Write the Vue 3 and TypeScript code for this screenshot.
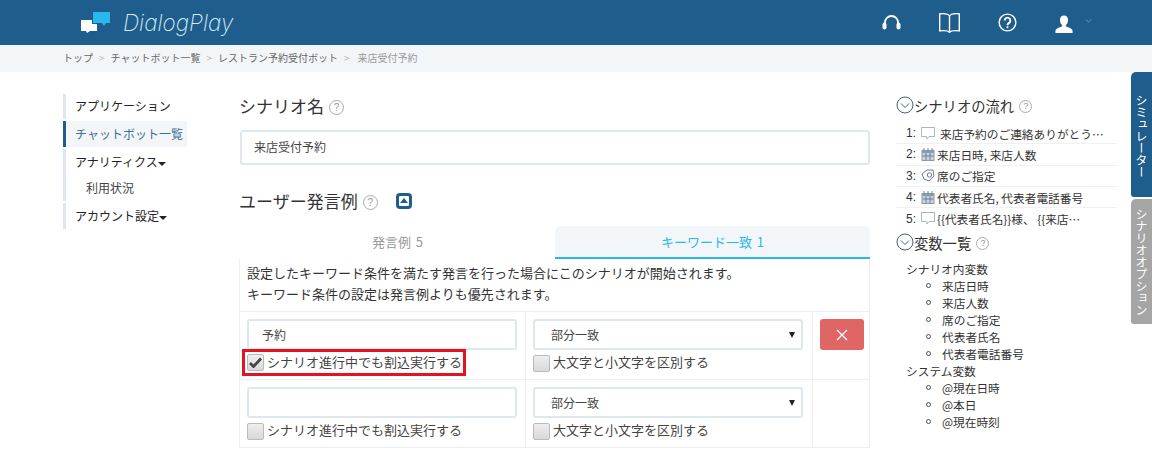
<script setup lang="ts">
const crumbs = ['チャットボット一覧', 'レストラン予約受付ボット']
const flow = [
  { n: '1:', icon: 'chat', text: '来店予約のご連絡ありがとう…' },
  { n: '2:', icon: 'cal', text: '来店日時, 来店人数' },
  { n: '3:', icon: 'tag', text: '席のご指定' },
  { n: '4:', icon: 'cal', text: '代表者氏名, 代表者電話番号' },
  { n: '5:', icon: 'chat', text: '{{代表者氏名}}様、 {{来店…' },
]
const scenarioVars = ['来店日時', '来店人数', '席のご指定', '代表者氏名', '代表者電話番号']
const systemVars = ['@現在日時', '@本日', '@現在時刻']
const rows = [
  { value: '予約', checked: true, removable: true },
  { value: '', checked: false, removable: false },
]
</script>

<template>
  <div class="page">
    <header class="topbar">
      <div class="brand">
        <svg class="logo" width="29" height="21" viewBox="0 0 29 21">
          <path d="M12 0h17v11h-4l-2 3-2-3H12z" fill="#2bb7ea" />
          <path d="M0 8h11v4h5v7H9l-3 2-1-2H0z" fill="#fff" />
        </svg>
        <span class="brand-name">DialogPlay</span>
      </div>
      <nav class="topnav">
        <svg width="19" height="15" viewBox="0 0 19 15" fill="none">
          <path d="M3 10V7.500a6.500 6.500 0 0 1 13 0V10" stroke="#fff" stroke-width="1.800" />
          <rect x="0.500" y="7.500" width="4" height="7" rx="2" fill="#fff" />
          <rect x="14.500" y="7.500" width="4" height="7" rx="2" fill="#fff" />
        </svg>
        <svg width="21" height="20" viewBox="0 0 21 20" fill="none" stroke="#fff" stroke-width="1.400">
          <path d="M.7.900c4-.5 8-.5 9.800 2 1.800-2.500 5.800-2.500 9.800-2v17c-4-.5-8-.5-9.800 1.400-1.800-1.900-5.800-1.900-9.800-1.400z" />
          <path d="M10.500 3v16" />
        </svg>
        <svg width="19" height="19" viewBox="0 0 20 20" fill="none" stroke="#fff">
          <circle cx="10" cy="10" r="8.800" stroke-width="1.500" />
          <path d="M7 7.800a3 3 0 1 1 4.600 2.600c-1 .7-1.600 1.200-1.600 2.400" stroke-width="2" />
          <circle cx="10" cy="15" r="1.100" fill="#fff" stroke="none" />
        </svg>
        <span class="user">
          <svg width="18" height="19" viewBox="0 0 20 20">
            <path d="M10 0c3 0 4.500 2.200 4.500 5 0 2.500-1 4.500-2.300 5.600v1.700c2.500 1 6.800 1.900 7.300 4.700v2.500H.5V17c.5-2.800 4.800-3.700 7.300-4.700v-1.700C6.500 9.500 5.500 7.500 5.500 5 5.500 2.200 7 0 10 0z" fill="#fff" />
          </svg>
          <svg class="user-caret" width="7" height="4" viewBox="0 0 8 5" fill="none">
            <path d="M.5.500 4 4 7.500.500" stroke="#7fa3bf" />
          </svg>
        </span>
      </nav>
    </header>

    <div class="crumbs">
      <span>トップ</span>
      <i>&gt;</i>
      <template v-for="c in crumbs" :key="c">
        <span>{{ c }}</span>
        <i>&gt;</i>
      </template>
      <span class="current">来店受付予約</span>
    </div>

    <div class="content">
      <aside class="side">
        <ul class="side-list">
          <li class="first">アプリケーション</li>
          <li class="active">チャットボット一覧</li>
          <li class="group">
            アナリティクス<b class="caret"></b>
            <div class="sub">利用状況</div>
          </li>
          <li class="last">アカウント設定<b class="caret"></b></li>
        </ul>
      </aside>

      <main class="main">
        <h2 class="heading">シナリオ名 <span class="help">?</span></h2>
        <div class="field name-field">来店受付予約</div>

        <h2 class="heading second">
          ユーザー発言例 <span class="help">?</span>
          <span class="collapse"><b></b></span>
        </h2>

        <div class="tabs">
          <div class="tab">発言例 5</div>
          <div class="tab on">キーワード一致 1</div>
        </div>

        <div class="table">
          <p class="intro">
            設定したキーワード条件を満たす発言を行った場合にこのシナリオが開始されます。<br />
            キーワード条件の設定は発言例よりも優先されます。
          </p>
          <div v-for="(r, i) in rows" :key="i" class="row">
            <div class="cell">
              <div class="field small">{{ r.value }}</div>
              <label class="check" :class="{ marked: r.checked }">
                <span class="box">
                  <svg v-if="r.checked" width="13" height="11" viewBox="0 0 13 11">
                    <path d="M1 6l3.500 3.500L12 1.500" fill="none" stroke="#444" stroke-width="2.800" />
                  </svg>
                </span>
                <span class="check-text">シナリオ進行中でも割込実行する</span>
              </label>
            </div>
            <div class="cell">
              <div class="field small select">部分一致<b></b></div>
              <label class="check">
                <span class="box"></span>
                <span class="check-text">大文字と小文字を区別する</span>
              </label>
            </div>
            <div class="cell action">
              <button v-if="r.removable" class="remove" type="button">
                <svg width="12" height="12" viewBox="0 0 12 12">
                  <path d="M1 1l10 10M11 1 1 11" stroke="#fff" stroke-width="1.300" />
                </svg>
              </button>
            </div>
          </div>
        </div>
      </main>

      <aside class="right">
        <h3 class="r-head">
          <svg class="chev" width="18" height="18" viewBox="0 0 18 18" fill="none">
            <circle cx="9" cy="9" r="8" stroke="#46607a" />
            <path d="M5 7.500 9 11.500 13 7.500" stroke="#46607a" />
          </svg>シナリオの流れ <span class="help">?</span>
        </h3>
        <ol class="flow">
          <li v-for="f in flow" :key="f.n">
            <span class="num">{{ f.n }}</span>
            <svg v-if="f.icon === 'chat'" class="ficon" width="14" height="13" viewBox="0 0 14 13" fill="none">
              <path d="M.5.500h13v9H8l-2 2.500-.5-2.500h-5z" stroke="#a9b5c0" />
            </svg>
            <svg v-else-if="f.icon === 'cal'" class="ficon" width="14" height="13" viewBox="0 0 14 13">
              <rect x=".5" y="2" width="13" height="11" fill="#8a9cb0" />
              <rect x="1.500" y="5" width="11" height="7" fill="#c8d2dc" />
              <path d="M3 0v3M7 0v3M11 0v3M1.500 8h11M5 5v7M9 5v7" stroke="#6f8297" />
            </svg>
            <svg v-else class="ficon" width="14" height="13" viewBox="0 0 14 13" fill="none" stroke="#6f7b86">
              <path d="M1 5 6 1h6l1 6-5 5-5-2z" />
              <circle cx="8.500" cy="6" r="2.200" />
            </svg>
            <span :class="{ gap: f.n === '1:' }">{{ f.text }}</span>
          </li>
        </ol>
        <h3 class="r-head">
          <svg class="chev" width="18" height="18" viewBox="0 0 18 18" fill="none">
            <circle cx="9" cy="9" r="8" stroke="#46607a" />
            <path d="M5 7.500 9 11.500 13 7.500" stroke="#46607a" />
          </svg>変数一覧 <span class="help">?</span>
        </h3>
        <div class="vars">
          <div>シナリオ内変数</div>
          <ul>
            <li v-for="v in scenarioVars" :key="v">{{ v }}</li>
          </ul>
          <div>システム変数</div>
          <ul>
            <li v-for="v in systemVars" :key="v">{{ v }}</li>
          </ul>
        </div>
      </aside>
    </div>

    <div class="rail">
      <div class="rail-tab sim">シミュレーター</div>
      <div class="rail-tab opt">シナリオオプション</div>
    </div>
  </div>
</template>

<style>
html, body { margin: 0; background: #fff; overflow: hidden; }
</style>

<style scoped>
.page {
  position: relative;
  width: 1152px;
  height: 465px;
  overflow: hidden;
  font-family: "Noto Sans CJK JP", "Noto Sans", sans-serif;
  font-size: 12px;
  color: #333;
}
.topbar {
  height: 45px;
  background: #1f5d8c;
  display: flex;
  align-items: center;
  justify-content: space-between;
  padding: 0 60px 0 81px;
  box-sizing: border-box;
}
.brand { display: flex; align-items: center; gap: 13px; }
.logo { display: block; }
.brand-name {
  font-family: Inter, "Open Sans", sans-serif;
  font-style: italic;
  font-weight: 200;
  font-size: 22.500px;
  color: #d5eaf8;
}
.topnav { display: flex; align-items: center; gap: 38px; }
.topnav svg { display: block; }
.user { display: flex; align-items: center; gap: 12px; margin-top: 4px; }
.user-caret { margin-bottom: 8px; }
.crumbs {
  height: 27px;
  background: #f3f6f9;
  display: flex;
  align-items: center;
  padding: 0 0 2px 63px;
  box-sizing: border-box;
  font-size: 10px;
  color: #666;
}
.crumbs i { font-style: normal; color: #b5b5b5; margin: 0 6px; }
.crumbs .current { color: #999; margin-left: 2px; }

.content {
  display: grid;
  grid-template-columns: 124px 630px 221px;
  padding: 22px 0 0 63px;
}
.side { width: 124px; }
.side-list {
  list-style: none;
  margin: 0;
  padding: 0;
  display: flex;
  flex-direction: column;
  gap: 2px;
}
.side-list li {
  line-height: 24px;
  min-height: 26px;
  padding: 1px 0 0 9px;
  box-sizing: border-box;
  border-left: 3px solid #dfe7ee;
  color: #222;
}
.side-list li.first { min-height: 25px; line-height: 22px; }
.side-list li.group { height: 52px; }
.side-list li.last { line-height: 23px; }
.side-list li.active {
  border-left-color: #1f5d8c;
  background: #f3f6f9;
  color: #3f6f92;
}
.sub { padding: 2px 0 0 11px; color: #444; height: 24px; }
.caret {
  display: inline-block;
  border: 4px solid transparent;
  border-top: 4px solid #222;
  border-bottom: 0;
  vertical-align: middle;
}

.main { margin-left: 53px; width: 630px; }
.heading {
  margin: -1px 0 0 -1px;
  height: 26px;
  line-height: 26px;
  font-size: 17px;
  font-weight: 400;
  color: #333;
  display: flex;
  align-items: center;
  gap: 5px;
}
.second { margin-top: 23px; }
.help {
  display: inline-flex;
  align-items: center;
  justify-content: center;
  width: 13px;
  height: 13px;
  border: 1.500px solid #aaa;
  border-radius: 50%;
  font-size: 10px;
  line-height: 1;
  color: #999;
  margin-top: 3px;
  box-sizing: content-box;
  font-family: "Liberation Sans", sans-serif;
}
.collapse {
  width: 16px;
  height: 16px;
  box-sizing: border-box;
  border: 3px solid #1f5d8c;
  border-radius: 4px;
  margin: -1px 0 0 13px;
  display: inline-flex;
  align-items: center;
  justify-content: center;
}
.collapse b {
  border: 4px solid transparent;
  border-bottom: 5px solid #1f5d8c;
  border-top: 0;
}
.field {
  box-sizing: border-box;
  border: 2px solid #dfe7ee;
  border-radius: 3px;
  background: #fff;
  color: #444;
}
.name-field {
  margin-top: 11px;
  height: 35px;
  line-height: 29px;
  padding-left: 12px;
  width: 630px;
}
.tabs {
  display: flex;
  margin-top: 12px;
  width: 630px;
  height: 33px;
  font-size: 13px;
}
.tab {
  flex: 1;
  text-align: center;
  line-height: 31px;
  color: #999;
  box-sizing: border-box;
  word-spacing: 2px;
}
.tab.on {
  flex: 0 0 315px;
  background: #f3f6f9;
  color: #2bb7ea;
  border-bottom: 2px solid #2bb7ea;
  border-radius: 6px 6px 0 0;
}
.table {
  width: 631px;
  margin-left: -1px;
  box-sizing: border-box;
  border: 1px solid #eee;
  border-top: 0;
}
.intro {
  margin: 0;
  height: 52px;
  padding: 3px 7px 0;
  box-sizing: border-box;
  font-size: 13px;
  line-height: 21px;
  color: #333;
}
.row {
  display: grid;
  grid-template-columns: 286px 287px 1fr;
  height: 68px;
  box-sizing: border-box;
  border-top: 1px solid #eee;
}
.cell {
  padding: 7px 9px 0 7px;
  box-sizing: border-box;
  border-right: 1px solid #eee;
}
.cell:first-child { padding-right: 8px; }
.cell:last-child { border-right: 0; }
.small {
  height: 31px;
  line-height: 27px;
  padding-left: 13px;
  position: relative;
}
.select { padding-left: 16px; }
.select b {
  position: absolute;
  right: 6px;
  top: 11px;
  border: 3px solid transparent;
  border-top: 6px solid #222;
  border-bottom: 0;
}
.check {
  display: flex;
  align-items: center;
  gap: 3px;
  height: 20px;
  margin-top: 3px;
  font-size: 13px;
  color: #444;
  position: relative;
  white-space: nowrap;
}
.check-text { margin-bottom: 3px; }
.box {
  width: 17px;
  height: 17px;
  box-sizing: border-box;
  border: 1px solid #bbb;
  border-radius: 2px;
  background: linear-gradient(#eee, #d9d9d9);
  display: inline-flex;
  align-items: center;
  justify-content: center;
  flex: none;
}
.marked {
  outline: 3px solid #e2141f;
  outline-offset: -3px;
  width: 224px;
  height: 27px;
  margin: -1px 0 0 -5px;
  padding-left: 5px;
  box-sizing: border-box;
}
.action { padding: 7px 6px 0 7px; }
.remove {
  display: flex;
  align-items: center;
  justify-content: center;
  width: 44px;
  height: 31px;
  background: #e06666;
  border: 0;
  border-radius: 3px;
  padding: 0;
}

.right { margin-left: 79px; width: 221px; }
.r-head {
  margin: 0;
  height: 23px;
  font-size: 14.300px;
  font-weight: 400;
  color: #333;
  display: flex;
  align-items: center;
  white-space: pre;
}
.chev { margin-bottom: 1px; }
.r-head .help { width: 11px; height: 11px; font-size: 9px; margin-top: 2px; margin-left: 2px; }
.flow { list-style: none; margin: 6px 0 2px; padding: 0; }
.flow li {
  height: 21.300px;
  box-sizing: border-box;
  border-bottom: 1px solid #f1f1f1;
  padding-left: 10px;
  font-size: 11.700px;
  display: flex;
  align-items: center;
  white-space: nowrap;
  color: #333;
}
.flow li:last-child { border-bottom: 0; }
.num { margin-right: 5px; font-family: "Liberation Sans", sans-serif; font-size: 12px; }
.ficon { flex: none; margin-right: 2px; }
.gap { margin-left: 3px; }
.vars { margin-top: 6px; padding-left: 10px; font-size: 11.700px; line-height: 17px; color: #333; }
.vars ul { margin: 0; padding: 0 0 0 36px; list-style: none; }
.vars li { position: relative; }
.vars li::before {
  content: "";
  position: absolute;
  left: -16px;
  top: 6px;
  width: 3px;
  height: 3px;
  border: 1px solid #555;
  border-radius: 50%;
}

.rail {
  position: absolute;
  right: 0;
  top: 72px;
  width: 21px;
  display: flex;
  flex-direction: column;
  gap: 2px;
}
.rail-tab {
  writing-mode: vertical-rl;
  width: 21px;
  box-sizing: border-box;
  color: #fff;
  font-size: 12px;
  line-height: 21px;
  border-radius: 5px 0 0 3px;
}
.sim { height: 125px; background: #1f5d8c; padding-top: 22px; }
.opt { height: 125px; background: #a5a5a5; padding-top: 9px; }
</style>
